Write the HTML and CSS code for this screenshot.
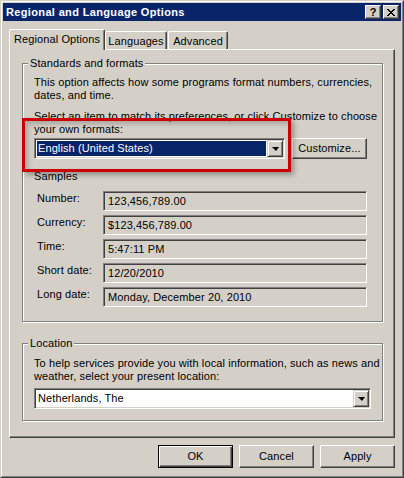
FILE: index.html
```
<!DOCTYPE html>
<html>
<head>
<meta charset="utf-8">
<link rel="stylesheet" href="styles.css">
</head>
<body>
<div class="window">
  <div class="frame">
    <div class="titlebar">
      <span class="title">Regional and Language Options</span>
      <span class="cbtn help">?</span>
      <span class="cbtn close"><svg width="8" height="7" viewBox="0 0 8 7" shape-rendering="crispEdges"><path d="M0 0h2v1h-2zM6 0h2v1h-2zM1 1h2v1h-2zM5 1h2v1h-2zM2 2h4v1h-4zM3 3h2v1h-2zM2 4h4v1h-4zM1 5h2v1h-2zM5 5h2v1h-2zM0 6h2v1h-2zM6 6h2v1h-2z" fill="#000"/></svg></span>
    </div>
    <div class="content">
      <div class="tabs">
        <div class="tab active">Regional Options</div>
        <div class="tab t-lang">Languages</div>
        <div class="tab t-adv">Advanced</div>
      </div>
      <div class="panel">
        <div class="group g1">
          <div class="glabel">Standards and formats</div>
          <p class="desc d1">This option affects how some programs format numbers, currencies,<br>dates, and time.</p>
          <p class="desc d2">Select an item to match its preferences, or click Customize to choose<br>your own formats:</p>
          <div class="combo-row">
            <div class="combo c-format">
              <div class="combo-value selected">English (United States)</div>
              <div class="combo-btn"><span class="arrow"></span></div>
            </div>
            <div class="btn">Customize...</div>
          </div>
          <div class="samples-title">Samples</div>
          <div class="samples">
            <div class="slabel">Number:</div><div class="field">123,456,789.00</div>
            <div class="slabel">Currency:</div><div class="field">$123,456,789.00</div>
            <div class="slabel">Time:</div><div class="field">5:47:11 PM</div>
            <div class="slabel">Short date:</div><div class="field">12/20/2010</div>
            <div class="slabel">Long date:</div><div class="field">Monday, December 20, 2010</div>
          </div>
        </div>
        <div class="group g2">
          <div class="glabel">Location</div>
          <p class="desc d3">To help services provide you with local information, such as news and<br>weather, select your present location:</p>
          <div class="combo c-loc">
            <div class="combo-value">Netherlands, The</div>
            <div class="combo-btn"><span class="arrow"></span></div>
          </div>
        </div>
      </div>
      <div class="buttons">
        <div class="btn default">OK</div>
        <div class="btn">Cancel</div>
        <div class="btn">Apply</div>
      </div>
    </div>
  </div>
  <div class="annotation"></div>
</div>
</body>
</html>
```
FILE: styles.css
```
* { box-sizing: border-box; }
body {
  margin: 0;
  font-family: "Liberation Sans", Arial, sans-serif;
  font-size: 11px;
  line-height: 13px;
  letter-spacing: 0.1px;
  color: #000;
  background: #d4d0c8;
}
.window {
  position: relative;
  width: 404px;
  height: 478px;
  background: #d4d0c8;
  border: 1px solid;
  border-color: #d4d0c8 #404040 #404040 #d4d0c8;
}
.frame {
  height: 100%;
  border: 1px solid;
  border-color: #fff #808080 #808080 #fff;
  padding: 1px;
}
.titlebar {
  height: 18px;
  background: #0a246a;
  display: flex;
  align-items: center;
  padding: 0 2px 0 2px;
}
.title {
  flex: 1;
  color: #fff;
  font-weight: bold;
  font-size: 11px;
  letter-spacing: 0.35px;
  padding-left: 1px;
}
.cbtn {
  width: 16px;
  height: 14px;
  background: #d4d0c8;
  border: 1px solid;
  border-color: #fff #404040 #404040 #fff;
  box-shadow: inset -1px -1px 0 #808080;
  display: flex;
  align-items: center;
  justify-content: center;
  font-weight: bold;
  font-size: 11px;
  line-height: 11px;
  letter-spacing: 0;
}
.cbtn.close { margin-left: 2px; }
.cbtn.close svg { display: block; }
.content {
  padding: 8px 6px 0 6px;
}
.tabs {
  display: flex;
  align-items: flex-end;
  height: 21px;
  margin-bottom: -1px;
  position: relative;
  z-index: 1;
}
.tab {
  height: 18px;
  margin-bottom: 1px;
  padding-top: 3px;
  text-align: center;
  background: #d4d0c8;
  border-top: 1px solid #fff;
  border-left: 1px solid #fff;
  border-right: 1px solid #404040;
  box-shadow: inset -1px 0 0 #808080;
  border-radius: 2px 2px 0 0;
}
.tab.active {
  width: 96px;
  height: 21px;
  margin-bottom: 0;
}
.t-lang { width: 62px; }
.t-adv { width: 60px; margin-left: 1px; }
.panel {
  height: 389px;
  border-top: 1px solid #fff;
  border-left: 1px solid #fff;
  border-right: 1px solid #404040;
  border-bottom: 1px solid #404040;
  box-shadow: inset -1px -1px 0 #808080;
  padding: 13px 11px 0 12px;
}
.group {
  border: 1px solid #808080;
  box-shadow: inset 1px 1px 0 #fff, 1px 1px 0 #fff;
  padding: 0 0 0 11px;
}
.g1 { padding-bottom: 14px; }
.g2 { margin-top: 21px; padding-bottom: 11px; }
.glabel {
  width: fit-content;
  margin: -7px 0 0 -6px;
  padding: 0 2px;
  background: #d4d0c8;
}
.desc { margin: 0; }
.d1 { margin-top: 6px; }
.d2 { margin-top: 8px; }
.d3 { margin-top: 7px; }
.combo-row {
  display: flex;
  gap: 7px;
  margin-top: 2px;
}
.combo {
  display: flex;
  height: 21px;
  background: #fff;
  border: 1px solid;
  border-color: #808080 #fff #fff #808080;
  box-shadow: inset 1px 1px 0 #404040, inset -1px -1px 0 #d4d0c8;
  padding: 1px;
}
.c-format { width: 251px; }
.c-loc { width: 337px; margin-top: 5px; }
.combo-value {
  flex: 1;
  margin: 1px;
  padding-left: 1px;
  line-height: 15px;
  white-space: nowrap;
}
.combo-value.selected {
  background: #0a246a;
  color: #fff;
}
.combo-btn {
  width: 16px;
  background: #d4d0c8;
  border: 1px solid;
  border-color: #d4d0c8 #404040 #404040 #d4d0c8;
  box-shadow: inset 1px 1px 0 #fff, inset -1px -1px 0 #808080;
  display: flex;
  align-items: center;
  justify-content: center;
}
.arrow {
  width: 0;
  height: 0;
  border-left: 4px solid transparent;
  border-right: 3px solid transparent;
  border-top: 4px solid #000;
}
.btn {
  width: 75px;
  height: 23px;
  background: #d4d0c8;
  border: 1px solid;
  border-color: #fff #404040 #404040 #fff;
  box-shadow: inset -1px -1px 0 #808080;
  display: flex;
  align-items: center;
  justify-content: center;
}
.combo-row .btn { height: 21px; }
.btn.default {
  border: 1px solid #000;
  box-shadow: inset 1px 1px 0 #fff, inset -1px -1px 0 #404040, inset -2px -2px 0 #808080;
}
.samples-title { margin-top: 11px; }
.samples {
  display: grid;
  grid-template-columns: 66px 264px;
  row-gap: 4px;
  margin-top: 8px;
  padding-left: 3px;
}
.slabel { padding-top: 1px; }
.field {
  height: 20px;
  border: 1px solid;
  border-color: #808080 #fff #fff #808080;
  box-shadow: inset 1px 1px 0 #404040, inset -1px -1px 0 #d4d0c8;
  padding: 1px 4px;
  line-height: 16px;
  white-space: nowrap;
}
.buttons {
  display: flex;
  justify-content: flex-end;
  gap: 6px;
  margin-top: 7px;
}
.annotation {
  position: absolute;
  left: 21px;
  top: 117px;
  width: 269px;
  height: 54px;
  border: 3px solid #cc0000;
  box-shadow: 3px 3px 5px rgba(0,0,0,0.3), inset 3px 3px 5px rgba(0,0,0,0.2);
}
```
